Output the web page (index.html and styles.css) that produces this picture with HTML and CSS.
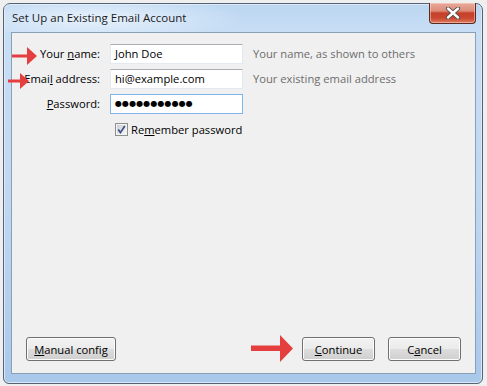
FILE: index.html
```html
<!DOCTYPE html>
<html>
<head>
<meta charset="utf-8">
<link rel="stylesheet" href="styles.css">
</head>
<body>
<div class="window">
  <div class="titlebar">
    <span class="title">Set Up an Existing Email Account</span>
    <div class="close">
      <svg width="18" height="12" viewBox="0 0 18 12">
        <path d="M4 1.5 L14 10.5 M14 1.5 L4 10.5" stroke="#4a4a4a" stroke-width="4.2" stroke-linecap="round"/>
        <path d="M4 1.5 L14 10.5 M14 1.5 L4 10.5" stroke="#ffffff" stroke-width="2.4" stroke-linecap="round"/>
      </svg>
    </div>
  </div>
  <div class="client">
    <div class="form">
      <label class="lbl">Your <u>n</u>ame:</label>
      <div class="input">John Doe</div>
      <span class="hint">Your name, as shown to others</span>

      <label class="lbl">Emai<u>l</u> address:</label>
      <div class="input">hi@example.com</div>
      <span class="hint">Your existing email address</span>

      <label class="lbl"><u>P</u>assword:</label>
      <div class="input focused dots">●●●●●●●●●●●</div>
      <span></span>

      <span></span>
      <div class="check-row">
        <svg class="checkbox" width="13" height="13" viewBox="0 0 13 13">
          <defs>
            <linearGradient id="cb" x1="0" y1="0" x2="1" y2="1">
              <stop offset="0" stop-color="#cbcfd5"/>
              <stop offset="1" stop-color="#f6f6f6"/>
            </linearGradient>
          </defs>
          <rect x="0.5" y="0.5" width="12" height="12" fill="#f4f4f4" stroke="#8e8f8f"/>
          <rect x="2" y="2" width="9" height="9" fill="url(#cb)"/>
          <path d="M3.2 6.6 L5.4 9.6 L9.8 3" stroke="#3c4f84" stroke-width="1.7" fill="none"/>
        </svg>
        <span class="check-label">Re<u>m</u>ember password</span>
      </div>
      <span></span>
    </div>
    <div class="spacer"></div>
    <div class="buttons">
      <button class="btn manual"><u>M</u>anual config</button>
      <div class="grow"></div>
      <button class="btn"><u>C</u>ontinue</button>
      <button class="btn">C<u>a</u>ncel</button>
    </div>
  </div>

  <svg class="arrow a1" width="25" height="18" viewBox="0 0 25 18">
    <path d="M0 7.5 H15 V0 L25 9 L15 18 V10.5 H0 Z" fill="#e53e3e"/>
  </svg>
  <svg class="arrow a2" width="21" height="16" viewBox="0 0 21 16">
    <path d="M0 6.5 H12 V0 L21 8 L12 16 V9.5 H0 Z" fill="#e53e3e"/>
  </svg>
  <svg class="arrow a3" width="42" height="27" viewBox="0 0 42 27">
    <path d="M0 10.5 H29 V0 L42 13.5 L29 27 V16 H0 Z" fill="#e53e3e"/>
  </svg>
</div>
</body>
</html>
```
FILE: styles.css
```css
* { box-sizing: border-box; }
html, body {
  margin: 0;
  padding: 0;
  background: #efefef;
  font-family: "Open Sans", "Noto Sans", sans-serif;
  font-size: 11.2px;
  color: #000;
}
.window {
  position: relative;
  margin: 3px 0 0 3px;
  width: 480px;
  height: 381px;
  border: 1px solid #556374;
  border-radius: 7px 7px 6px 6px;
  background: linear-gradient(to bottom, #bcd6f1 0px, #c8def5 30px, #bfd7f1 200px, #a9c8ea 100%);
  padding: 0 6px 9px 7px;
  display: flex;
  flex-direction: column;
  box-shadow: inset 0 0 0 1px #dbe9f8;
}
.titlebar {
  height: 28px;
  display: flex;
  align-items: flex-start;
  position: relative;
  background: radial-gradient(ellipse 150px 24px at 90px 14px, rgba(235,244,253,0.9), rgba(235,244,253,0));
  margin: 0 -6px 0 -7px;
  padding-left: 8px;
}
.title {
  margin-top: 6px;
  font-size: 11.5px;
  color: #1b1b1b;
}
.close {
  position: absolute;
  right: 6px;
  top: -1px;
  width: 47px;
  height: 21px;
  border: 1px solid #5a2a22;
  border-top: none;
  border-radius: 0 0 4px 4px;
  background: linear-gradient(to bottom, #e9a99a 0%, #dd8b78 40%, #c4402a 50%, #c9472f 75%, #dd7c5e 100%);
  display: flex;
  align-items: center;
  justify-content: center;
  box-shadow: inset 0 0 0 1px rgba(255,220,210,0.5);
}
.client {
  flex: 1;
  background: #f0f0f0;
  border: 1px solid #8a9fb8;
  display: flex;
  flex-direction: column;
  padding: 11px 14px 12px 14px;
}
.form {
  display: grid;
  grid-template-columns: 88px 133px 1fr;
  column-gap: 10px;
  row-gap: 5px;
  align-items: center;
  margin-left: -14px;
}
.lbl {
  text-align: right;
  white-space: nowrap;
  line-height: 20px;
}
.input {
  height: 20px;
  background: #fff;
  border: 1px solid #e3e9ef;
  border-top-color: #abadb3;
  padding-left: 4px;
  line-height: 18px;
  white-space: nowrap;
  overflow: hidden;
}
.input.focused {
  border: 1px solid #7eb4ea;
}
.dots {
  font-family: "DejaVu Sans", sans-serif;
  font-size: 8px;
  letter-spacing: 0.1px;
  line-height: 18px;
}
.hint {
  color: #6d6d6d;
  white-space: nowrap;
  line-height: 20px;
}
.check-row {
  display: flex;
  align-items: center;
  gap: 3px;
  margin-top: 2px;
  padding-left: 5px;
  white-space: nowrap;
  height: 16px;
}
.checkbox { flex: none; }
.spacer { flex: 1; }
.buttons {
  display: flex;
  align-items: center;
  gap: 13px;
}
.grow { flex: 1; }
.btn {
  height: 24px;
  width: 73px;
  font-family: inherit;
  font-size: 11.2px;
  color: #000;
  border: 1px solid #707070;
  border-radius: 3px;
  background: linear-gradient(to bottom, #f2f2f2 0%, #ebebeb 50%, #dddddd 50%, #cfcfcf 100%);
  box-shadow: inset 0 0 0 1px #fcfcfc;
  padding: 0;
  white-space: nowrap;
}
.btn.manual { width: 90px; }
.arrow { position: absolute; }
.a1 { left: 8px; top: 43px; }
.a2 { left: 4px; top: 69px; }
.a3 { left: 247px; top: 331px; }
```
